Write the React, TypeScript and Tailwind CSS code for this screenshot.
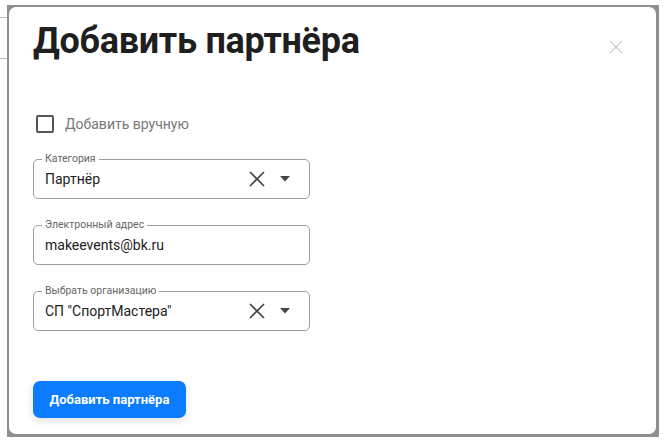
import React from "react";

function Field({ label, value, clearable }: { label: string; value: string; clearable?: boolean }) {
  return (
    <div className="relative w-[277px] h-[40px] rounded-[5px] border border-[#9e9e9e] flex items-center pl-[11px] pr-[19px]">
      <span className="absolute left-[8px] top-[-8px] bg-white px-[3px] text-[10.5px] leading-[14px] text-[#666]">{label}</span>
      <span className="flex-1 text-[14px] leading-[18px] text-[#222]">{value}</span>
      {clearable && (
        <div className="flex items-center gap-[14px]">
          <svg width="18" height="18" viewBox="0 0 18 18" className="block">
            <path d="M2 2 L16 16 M16 2 L2 16" stroke="#444" strokeWidth="1.7" fill="none" />
          </svg>
          <svg width="10" height="6" viewBox="0 0 10 6" className="block">
            <path d="M0 0 L10 0 L5 5.5 Z" fill="#444" />
          </svg>
        </div>
      )}
    </div>
  );
}

export default function App() {
  return (
    <div className="w-[665px] h-[445px] bg-white flex" style={{ fontFamily: "Roboto, 'Liberation Sans', sans-serif" }}>
      <div className="w-[7px] flex flex-col">
        <div className="h-[17px]" />
        <div className="h-px bg-[#bdbdbd]" />
        <div className="h-[40px]" />
        <div className="h-px bg-[#bdbdbd]" />
      </div>
      <div className="mt-[5px] w-[652px] h-[432px] bg-[#8f8f8f] pt-[2px] pl-[2px] pr-[3px] pb-[3px]">
        <div className="w-full h-full bg-white rounded-[7px] flex flex-col pl-[24px] pr-[33px]">
          <div className="flex items-start justify-between pt-[13px]">
            <h1 className="text-[36px] leading-[42px] font-bold text-[#1f1f1f] tracking-[-0.3px]">Добавить партнёра</h1>
            <svg width="14" height="14" viewBox="0 0 14 14" className="mt-[20px]">
              <path d="M1 1 L13 13 M13 1 L1 13" stroke="#cfcfcf" strokeWidth="1.3" fill="none" />
            </svg>
          </div>
          <label className="flex items-center mt-[53px] ml-[3px]">
            <span className="w-[18px] h-[18px] border-2 border-[#555] rounded-[2px] block" />
            <span className="ml-[11px] text-[14px] leading-[18px] text-[#777]">Добавить вручную</span>
          </label>
          <div className="mt-[26px] flex flex-col gap-[26px]">
            <Field label="Категория" value="Партнёр" clearable />
            <Field label="Электронный адрес" value="makeevents@bk.ru" />
            <Field label="Выбрать организацию" value={'СП "СпортМастера"'} clearable />
          </div>
          <button className="mt-[50px] w-[153px] h-[37px] rounded-[7px] bg-[#0b7bff] text-white text-[13px] font-bold shadow-[0_3px_8px_rgba(0,0,0,0.12)]">
            Добавить партнёра
          </button>
        </div>
      </div>
    </div>
  );
}
